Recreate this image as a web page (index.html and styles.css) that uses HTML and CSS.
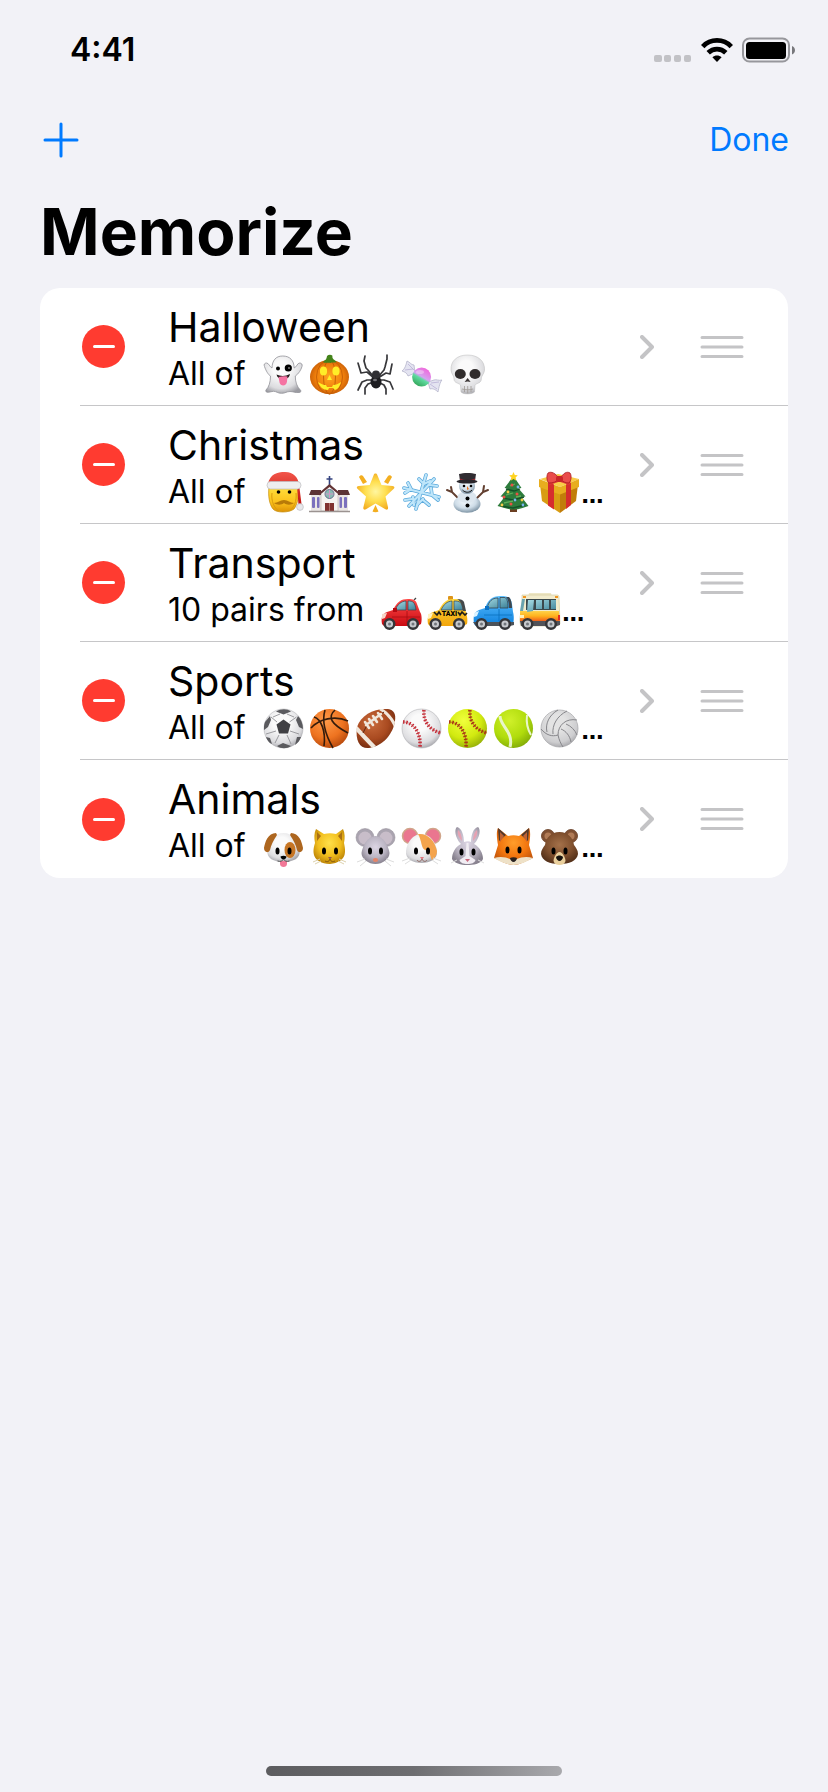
FILE: index.html
```html
<!DOCTYPE html>
<html lang="en">
<head>
<meta charset="utf-8">
<meta name="viewport" content="width=device-width, initial-scale=1">
<title>Memorize</title>
<link rel="stylesheet" href="styles.css">
</head>
<body>
<svg class="defs" width="0" height="0" aria-hidden="true">
  <defs>
    <radialGradient id="gWhite" cx=".45" cy=".35" r=".7"><stop offset=".3" stop-color="#fafafa"/><stop offset=".75" stop-color="#dcdcdf"/><stop offset="1" stop-color="#9b9ba1"/></radialGradient>
    <radialGradient id="gPumpkin" cx=".5" cy=".5" r=".6"><stop offset="0" stop-color="#ffa51f"/><stop offset=".6" stop-color="#f07f0c"/><stop offset="1" stop-color="#b65005"/></radialGradient>
    <linearGradient id="gCandy" x1=".2" y1="1" x2=".8" y2="0"><stop offset="0" stop-color="#2f9e50"/><stop offset=".42" stop-color="#5fdba0"/><stop offset=".52" stop-color="#d5a2f0"/><stop offset="1" stop-color="#f45fd8"/></linearGradient>
    <linearGradient id="gGold" x1="0" y1="0" x2="0" y2="1"><stop offset="0" stop-color="#ffdf3c"/><stop offset=".6" stop-color="#fcc21c"/><stop offset="1" stop-color="#dd9206"/></linearGradient>
    <radialGradient id="gStar" cx=".5" cy=".5" r=".55"><stop offset="0" stop-color="#fff6a0"/><stop offset=".5" stop-color="#ffdf50"/><stop offset="1" stop-color="#f2ab20"/></radialGradient>
    <linearGradient id="gRed" x1="0" y1="0" x2="0" y2="1"><stop offset="0" stop-color="#f2554a"/><stop offset="1" stop-color="#c11410"/></linearGradient>
    <radialGradient id="gSnow" cx=".45" cy=".35" r=".65"><stop offset="0" stop-color="#f8fcff"/><stop offset=".6" stop-color="#cfdde8"/><stop offset="1" stop-color="#7d93a4"/></radialGradient>
    <linearGradient id="gGlass" x1="0" y1="0" x2="1" y2="1"><stop offset="0" stop-color="#a6dbe4"/><stop offset="1" stop-color="#3b8197"/></linearGradient>
    <linearGradient id="gCarRed" x1="0" y1="0" x2="0" y2="1"><stop offset="0" stop-color="#ff4a48"/><stop offset="1" stop-color="#c90a12"/></linearGradient>
    <linearGradient id="gTaxi" x1="0" y1="0" x2="0" y2="1"><stop offset="0" stop-color="#ffd83c"/><stop offset="1" stop-color="#f2a50c"/></linearGradient>
    <linearGradient id="gCarBlue" x1="0" y1="0" x2="0" y2="1"><stop offset="0" stop-color="#5cc0ff"/><stop offset="1" stop-color="#0c7fdd"/></linearGradient>
    <linearGradient id="gBus" x1="0" y1="0" x2="0" y2="1"><stop offset="0" stop-color="#ffd24a"/><stop offset=".45" stop-color="#ffb31e"/><stop offset="1" stop-color="#f0501a"/></linearGradient>
    <radialGradient id="gOrangeBall" cx=".4" cy=".3" r=".75"><stop offset="0" stop-color="#ff9b4a"/><stop offset=".6" stop-color="#ee7320"/><stop offset="1" stop-color="#b4470c"/></radialGradient>
    <radialGradient id="gBrownBall" cx=".4" cy=".35" r=".7"><stop offset="0" stop-color="#c96b3c"/><stop offset=".6" stop-color="#a94a20"/><stop offset="1" stop-color="#712a0e"/></radialGradient>
    <radialGradient id="gLime" cx=".4" cy=".3" r=".75"><stop offset="0" stop-color="#f0ff3c"/><stop offset=".6" stop-color="#d2ea10"/><stop offset="1" stop-color="#92ac08"/></radialGradient>
    <radialGradient id="gTennis" cx=".4" cy=".3" r=".75"><stop offset="0" stop-color="#d0f02a"/><stop offset=".6" stop-color="#b0dc0c"/><stop offset="1" stop-color="#7fa808"/></radialGradient>
    <radialGradient id="gCat" cx=".5" cy=".4" r=".6"><stop offset="0" stop-color="#ffe04a"/><stop offset=".6" stop-color="#f2bf1e"/><stop offset="1" stop-color="#c08808"/></radialGradient>
    <radialGradient id="gMouse" cx=".5" cy=".4" r=".6"><stop offset="0" stop-color="#dcd5e4"/><stop offset=".6" stop-color="#bcb6c4"/><stop offset="1" stop-color="#88828f"/></radialGradient>
    <radialGradient id="gFox" cx=".5" cy=".4" r=".6"><stop offset="0" stop-color="#ff9d2a"/><stop offset=".6" stop-color="#f2760f"/><stop offset="1" stop-color="#c4560a"/></radialGradient>
    <radialGradient id="gBear" cx=".5" cy=".4" r=".6"><stop offset="0" stop-color="#a4714a"/><stop offset=".6" stop-color="#80502e"/><stop offset="1" stop-color="#56321a"/></radialGradient>
  </defs>
</svg>

<header class="status-bar">
  <time class="clock">4:41</time>
  <div class="indicators">
    <svg width="38" height="24" viewBox="0 0 38 24" aria-hidden="true"><g fill="#c2c2c6"><rect x="0" y="17" width="8" height="7" rx="2"/><rect x="10" y="17" width="7" height="7" rx="2"/><rect x="20" y="17" width="7" height="7" rx="2"/><rect x="30" y="17" width="7" height="7" rx="2"/></g></svg>
    <svg width="32" height="24" viewBox="0 0 32 24" aria-label="Wi-Fi"><g fill="none" stroke="#000" stroke-width="4.800"><path d="M1.700 8.600C9.500.4 22.500.4 30.300 8.600"/><path d="M7.200 14.800c5-4.900 12.600-4.900 17.600 0"/></g><path d="M16 24l-4.600-4.700c2.500-2.300 6.700-2.300 9.200 0z"/></svg>
    <svg width="54" height="26" viewBox="0 0 54 26" aria-label="Battery"><rect x="1" y="1.500" width="46" height="23" rx="6.500" fill="none" stroke="#97979c" stroke-width="2"/><rect x="4" y="5" width="40" height="17" rx="3.500"/><path d="M50 9c4 1.500 4 7 0 8.500z" fill="#77777b"/></svg>
  </div>
</header>

<nav class="toolbar">
  <button class="tool" type="button" aria-label="Add theme"><svg width="36" height="36" viewBox="0 0 36 36"><path d="M18 2v32M2 18h32" stroke="#007aff" stroke-width="3" stroke-linecap="round"/></svg></button>
  <button class="tool" type="button">Done</button>
</nav>

<main class="content">
<h1 class="title">Memorize</h1>
<ul class="themes">
  <li class="theme">
    <button class="delete" type="button" aria-label="Delete Halloween"></button>
    <div class="info">
      <h2 class="name">Halloween</h2>
      <p class="detail"><span class="pairs">All of</span>
        <span class="emojis">
          <svg class="emoji" viewBox="0 0 46 46"><path d="M22.700 5c-7 0-10.500 4.500-10.700 12-2.500-1-3-5-5.500-5-2 0-3 1.500-2 3.500C6 20 8.500 24 10.500 25c0 6-1.500 11-4.500 14-.8 1.500.5 2.500 2.500 2.300 2-.2 3-1 5-1 3 0 4 2 8 2s5-1.800 8.500-1.800c3 0 5 1.400 9 1 2-.2 2.500-1.500 1.300-2.500-3.500-3.500-5-8-5-14C38.500 23 41 19 42 15.500c.7-2-.5-3.500-2.200-3.500-2.700 0-2.900 4-5.600 5C34 9.500 30 5 22.700 5z" fill="url(#gWhite)" stroke="#929298" stroke-width=".8"/><circle cx="18" cy="17.500" r="2"/><circle cx="28.300" cy="17" r="3.600"/><circle cx="29" cy="17" r="1" fill="#777"/><path d="M16.500 23.500c4 2 9 2 13.500-.5-.5 3-2.500 5-6.500 5s-6.500-1.500-7-4.500z" fill="#24191b"/><path d="M18.500 26c3-1 6-1 9-.5l-.5 5c-.5 5-6.500 5-7.500 1z" fill="#f573a2"/></svg>
          <svg class="emoji" viewBox="0 0 46 46"><ellipse cx="23.500" cy="26" rx="19.500" ry="17" fill="url(#gPumpkin)"/><g fill="none" stroke="#c25c06" stroke-width=".9"><ellipse cx="23.500" cy="26" rx="13" ry="17"/><ellipse cx="23.500" cy="26" rx="6" ry="17"/></g><path d="M17 11c2-2 3.500-2 4-6 1.500-1.500 4-1.500 5.500-.3-.8 3 2 4 4 6-2.500 1.500-4 0-6 1.300-2-1-5 .7-7.500-1z" fill="#43831a"/><g fill="#ffee28"><ellipse cx="17.500" cy="20" rx="3.600" ry="4.500"/><ellipse cx="30" cy="20" rx="3.600" ry="4.500"/><path d="M23.500 24l2.500 5h-5zM12 31c4 2.500 6 3 8 3l1 2h5l1-2c3 0 5-1 8-3-1 4-3 7-6 8l-2-2h-4l-1 2c-5 0-8-3-10-8z"/></g></svg>
          <svg class="emoji" viewBox="0 0 46 46"><g fill="none" stroke="#38383b" stroke-width="1.700" stroke-linecap="round" stroke-linejoin="round"><path d="M22 26l-6-7-2-2-2-7 1-5M22 27l-7-6-6 1-3-10M22 29h-7l-5 2-4 8M22 31l-6 2-3 4v6M26 26l6-7 1-3 2-8V4M26 27l8-5 4 1 2-10M26 29h6l6 2 3 7M26 31l6 3 2 4v5"/></g><ellipse cx="24" cy="31" rx="5.500" ry="6.500" fill="#1e1e21"/><circle cx="24" cy="23.500" r="4" fill="#303034"/><ellipse cx="23" cy="29" rx="2" ry="1.200" fill="#747478"/></svg>
          <svg class="emoji" viewBox="0 0 46 46"><g fill="#e4e4f1" stroke="#adadc6" stroke-width=".7"><path d="M17 22l-7 3c-1-3-3-4-6-5 3-2 4-6 5-10 3 1 4 4 7 4z"/><path d="M30 31l6-2c2-1 5 1 8 0-2 2-3 7-4 12-2-2-5-4-8-3z"/></g><path d="M7 19l8-1M10 13l6 6M32 33l7 5M33 32l8-1" stroke="#b9b0d5" stroke-width=".8"/><circle cx="23.600" cy="26" r="9.500" fill="url(#gCandy)"/><ellipse cx="22" cy="21" rx="4" ry="2" fill="#fff" opacity=".35"/></svg>
          <svg class="emoji" viewBox="0 0 46 46"><path d="M23.500 4C13 4 6.500 10 7 19c.2 4 3.500 6 3 9-.2 4 5 4 6.500 6l.5 7c2 2.500 11 2.500 13.500 0l.5-7c2-2 6.500-2 6.300-6-.3-3 3-5 3.200-9C41 10 34 4 23.500 4z" fill="url(#gWhite)" stroke="#bbb" stroke-width=".5"/><ellipse cx="16.300" cy="23" rx="5.500" ry="5" fill="#302c2c"/><ellipse cx="31" cy="23" rx="5.500" ry="5" fill="#302c2c"/><path d="M23.600 27l3 4-3-.5-3 .5z" fill="#3c3636"/><path d="M18 38c4 1 8 1 11 0M20.500 35v6M23.700 35v7M27 35v6" fill="none" stroke="#a09b96" stroke-width=".8"/></svg>
        </span>
      </p>
    </div>
    <svg class="chevron" viewBox="0 0 14 24" aria-hidden="true"><path d="M2 2l10 10L2 22"/></svg>
    <svg class="handle" viewBox="0 0 44 24" aria-label="Reorder"><path d="M2 2.500h40M2 12h40M2 21.500h40"/></svg>
  </li>
  <li class="theme">
    <button class="delete" type="button" aria-label="Delete Christmas"></button>
    <div class="info">
      <h2 class="name">Christmas</h2>
      <p class="detail"><span class="pairs">All of</span>
        <span class="emojis">
          <svg class="emoji" viewBox="0 0 46 46"><path d="M9 18c-1 8 0 17 4 22 3 4 16 4 21 0 4-5 5-14 4-22z" fill="url(#gGold)" stroke="#c58c0a" stroke-width=".7"/><path d="M8 15C10 5 17 3 25 3c9 0 13 6 14 12l2.500 20-3 1L37 17z" fill="url(#gRed)"/><rect x="7" y="12.500" width="34" height="7.500" rx="3.700" fill="#eeeeef" stroke="#bdbdc1" stroke-width=".7"/><circle cx="40" cy="38" r="3.400" fill="#e7e7ea" stroke="#b4b4b8" stroke-width=".6"/><circle cx="18.500" cy="23" r="1.800"/><circle cx="29.500" cy="23" r="1.800"/><path d="M12 24c-1 8 2 15 7 18M36 24c1 8-2 15-7 18" fill="none" stroke="#d99c0d"/><path d="M14 34c4 0 6-3 10-3s6 3 10 3c-3 2.500-8 2-10 0-2 2-7 2.500-10 0z" fill="#b87a08"/></svg>
          <svg class="emoji" viewBox="0 0 46 46"><path d="M23.500 7v11M20.500 10h6" stroke="#34437f" stroke-width="1.600"/><path d="M5 26h37v16H5z" fill="#eae6e4"/><path d="M15 24l8.500-8 8.500 8v18H15z" fill="#f6f3f0" stroke="#b9b0ab" stroke-width=".6"/><path d="M3 26l2-5h10v5zM44 26l-2-5H32v5z" fill="#5c3335"/><path d="M13 24l10.500-9L34 24v2.500L23.500 18 13 26.500z" fill="#623335"/><circle cx="23.500" cy="25" r="4.500" fill="#89bcb3" stroke="#67708f"/><path d="M23.500 21v8M19.500 25h8" stroke="#d495c3"/><g fill="#7b70bd"><rect x="6" y="28" width="3" height="11" rx="1"/><rect x="11" y="28" width="2.500" height="11" rx="1"/><rect x="33.500" y="28" width="2.500" height="11" rx="1"/><rect x="38" y="28" width="3" height="11" rx="1"/></g><path d="M19 34h9v9h-9z" fill="#80322f"/><path d="M23.500 34v9" stroke="#cf9b92" stroke-width=".6"/><path d="M3 42.500h41" stroke="#9b9391" stroke-width="1.500"/></svg>
          <svg class="emoji" viewBox="0 0 46 46"><path d="M23.500 4.500c.8 0 1.400.5 1.800 1.400l4.200 10 11 1c2 .2 2.600 1.800 1 3.200l-8 7.500 2.500 10.700c.5 2-1 3-2.600 2L23.500 34.500 14 40.300c-1.600 1-3.200 0-2.600-2l2.600-10.700-8.300-7.500c-1.500-1.400-1-3 1-3.200l11-1 4-10c.4-.9 1-1.400 1.800-1.400z" fill="url(#gStar)"/><path d="M7 8c1-2 3-2.500 4-1l4 6-4 2zM40 8c-1-2-3-2.500-4-1l-4 6 4 2zM23.500 36l3 6.500c-1.500 1-4.500 1-6 0z" fill="#f3ae20"/></svg>
          <svg class="emoji" viewBox="0 0 46 46"><g stroke="#5aa9dc" stroke-width="3.600" stroke-linecap="round" fill="none"><path d="M28 6L18 40M6 19l35 9M11 37l25-27M21 10l5 5 6-3M33 19l1 7 6 5M10 14l3 6-6 4M15 28l1 8M25 30l-6 6M25 31l6 5M14 30l-7 1M32 16l7 1"/></g><g stroke="#bfe6fa" stroke-width="2.200" stroke-linecap="round" fill="none"><path d="M28 6L18 40M6 19l35 9M11 37l25-27M21 10l5 5 6-3M33 19l1 7 6 5M10 14l3 6-6 4M15 28l1 8M25 30l-6 6M25 31l6 5M14 30l-7 1M32 16l7 1"/></g></svg>
          <svg class="emoji" viewBox="0 0 46 46"><path d="M14 29l-6-6-5-2M8 23l-1-5M33 29l6-6 5-2M39 23l1-6" fill="none" stroke="#634031" stroke-width="2" stroke-linecap="round"/><ellipse cx="23" cy="35" rx="13.500" ry="8.800" fill="url(#gSnow)"/><ellipse cx="23" cy="28" rx="9.500" ry="6" fill="#dce6ee"/><circle cx="23" cy="17" r="8" fill="url(#gSnow)"/><path d="M15 5c4-1.500 13-1.500 17 0l-1 7H16z" fill="#302c31"/><path d="M16 9.500c5 2 10 2 15 0v2.500c-5 1.500-10 1.500-15 0z" fill="#9d2831"/><ellipse cx="23" cy="12.500" rx="10.500" ry="2" fill="#29262b"/><circle cx="20" cy="17" r="1.300"/><circle cx="27" cy="17" r="1.300"/><path d="M23 17l2 3-2 1z" fill="#ef7620"/><path d="M18.500 21c3 3 7 3 9.500 0" fill="none" stroke="#1a1a1a"/><circle cx="23.500" cy="29.500" r="2"/><circle cx="23.500" cy="36.500" r="2"/></svg>
          <svg class="emoji" viewBox="0 0 46 46"><path d="M20 38h7v5h-7z" fill="#6b3f22"/><path d="M23.500 7L14.500 19l3 .5-7 8 4 .5-7 9 7 2c6 2 12 2 18 0l6-2-7-9 4-.5-7-8 3-.5z" fill="#2d7c3c"/><path d="M16 20l8 2 6-2M13 29l10 2 11-3M11 37l12 2 12-3" fill="none" stroke="#145128" stroke-width="1.300"/><path d="M20 17l5-2M16 26l7-2M14 34l9-2M26 28l5-1" stroke="#61ae5a" stroke-width="1.300"/><path d="M23.500 3l1.300 3 3 .3-2.200 2.200.6 3.200-2.700-1.700-2.700 1.700.6-3.200-2.200-2.200 3-.3z" fill="#ffd321"/><g fill="#e84f43"><circle cx="22" cy="16" r="1.500"/><circle cx="27" cy="25" r="1.500"/><circle cx="14" cy="28" r="1.500"/><circle cx="21" cy="35" r="1.500"/></g><g fill="#f5cd4b"><circle cx="18" cy="23" r="1.400"/><circle cx="32" cy="31" r="1.400"/><circle cx="12" cy="36" r="1.400"/></g><g fill="#79b6ef"><circle cx="28" cy="18" r="1.400"/><circle cx="25" cy="31" r="1.400"/><circle cx="33" cy="36" r="1.400"/></g></svg>
          <svg class="emoji" viewBox="0 0 46 46"><path d="M4 15l20 7v22L6 32z" fill="#d89c12"/><path d="M42 15l-18 7v22l16-12z" fill="#c17d0a"/><path d="M4 10l18-5 21 5-19 8z" fill="#f9cc47"/><path d="M3 10l21 8 19-8v8l-19 7.500L3 18z" fill="#e8ad1e"/><path d="M12 13l6 2.500v25l-6-4zM30 15.500l5-2V36l-5 4z" fill="#d62d2d"/><path d="M13 7l21 7M33 7l-20 7" stroke="#df3837" stroke-width="4"/><path d="M23 10c-3-6-8-8-11-6-2 3-1 9 1 10 4 0 7-1 10-4zM24 10c3-6 7-8 10-6 2 3 1 8-1 10-3 0-6-1-9-4z" fill="#ea4c4a" stroke="#a91a1e" stroke-width=".8"/><rect x="20" y="7" width="7" height="6" rx="2" fill="#c82528"/></svg>
          <span class="more">…</span>
        </span>
      </p>
    </div>
    <svg class="chevron" viewBox="0 0 14 24" aria-hidden="true"><path d="M2 2l10 10L2 22"/></svg>
    <svg class="handle" viewBox="0 0 44 24" aria-label="Reorder"><path d="M2 2.500h40M2 12h40M2 21.500h40"/></svg>
  </li>
  <li class="theme">
    <button class="delete" type="button" aria-label="Delete Transport"></button>
    <div class="info">
      <h2 class="name">Transport</h2>
      <p class="detail"><span class="pairs">10 pairs from</span>
        <span class="emojis">
          <svg class="emoji" viewBox="0 0 46 46"><path d="M36 13l2-2" stroke="#444" stroke-width="1.300"/><path d="M4 37c-1-6 0-10 5-12l6-2c4-8 8-11 15-11 5 0 8 1 9 5l3 8c2 2 2 9 1 12l-4 2H6z" fill="url(#gCarRed)"/><path d="M17 23c3-6 6-8.500 11-9v9zM30 14c5 0 7 1 8 9h-8z" fill="url(#gGlass)" stroke="#36444e" stroke-width=".7"/><path d="M4 27l5-1-2 5-3 1z" fill="#f6d5c8"/><path d="M14 30h28M29 24v14" stroke="#a80c12" stroke-width=".8"/><path d="M15 21h4v4h-4z" fill="#b70911"/><g stroke="#353639" stroke-width="2.500" fill="#c6c9cd"><circle cx="11.500" cy="37" r="4.800"/><circle cx="35" cy="37" r="4.800"/></g><circle cx="11.500" cy="37" r="1.500" fill="#71767c"/><circle cx="35" cy="37" r="1.500" fill="#71767c"/></svg>
          <svg class="emoji" viewBox="0 0 46 46"><rect x="24" y="9" width="5" height="4" rx="1" fill="#dd9419"/><path d="M4 37c-1-6 0-10 5-12l6-2c4-8 8-11 15-11 7 0 9 1 11 11 2 3 3 11 2 14l-4 2H6z" fill="url(#gTaxi)"/><path d="M17 23c3-6 6-8.500 11-9v9zM30 14c6 0 8 1 9 9h-9z" fill="url(#gGlass)" stroke="#36444e" stroke-width=".7"/><path d="M33 12c4 0 6 1 7 3l2 9h-3c-1-6-2-10-6-12z" fill="#44494b"/><path d="M4 27l5-1-2 5-3 1z" fill="#fff1c1"/><path d="M10 25l3 3 2-3 2 3M34 25l2 3 2-3 3 3 2-2" fill="none" stroke="#1c1c1a" stroke-width="1.600"/><text class="taxi-sign" x="25.500" y="29" text-anchor="middle">TAXI</text><g stroke="#353639" stroke-width="2.500" fill="#c6c9cd"><circle cx="11.500" cy="37" r="4.800"/><circle cx="35" cy="37" r="4.800"/></g><circle cx="11.500" cy="37" r="1.500" fill="#71767c"/><circle cx="35" cy="37" r="1.500" fill="#71767c"/></svg>
          <svg class="emoji" viewBox="0 0 46 46"><path d="M4 37c-1-7 0-12 5-14l6-2c3-8 7-12 15-12 8 0 11 1 12 8l1 8c1 3 1 9 0 12l-4 2H6z" fill="url(#gCarBlue)"/><path d="M17 21c2-7 5-10 11-10v10zM30 10.500h5c2 1 3 4 3 10.500h-8z" fill="url(#gGlass)" stroke="#36444e" stroke-width=".8"/><path d="M36 10h3c2 2 3 6 3 11h-3c0-5-1-9-3-11z" fill="#3d474f"/><path d="M3 35h41v3l-4 1H6z" fill="#4c535a"/><path d="M4 26l5-2-2 5-3 1z" fill="#dcf3ff"/><path d="M14 28h28M29 22v12" stroke="#0870bc" stroke-width=".8"/><path d="M15 19h4v4h-4z" fill="#0b72c5"/><g stroke="#353639" stroke-width="2.500" fill="#c6c9cd"><circle cx="11.500" cy="37" r="4.800"/><circle cx="35" cy="37" r="4.800"/></g><circle cx="11.500" cy="37" r="1.500" fill="#71767c"/><circle cx="35" cy="37" r="1.500" fill="#71767c"/></svg>
          <svg class="emoji" viewBox="0 0 46 46"><path d="M13 6h22l1 4H12z" fill="#eee7c6"/><path d="M6 8h35c1.500 0 2 1 2 2l1 27-4 2H5c-2-5-1-11 1-16z" fill="#f2eccd" stroke="#d1c793" stroke-width=".6"/><path d="M4 24h39l1 11H4z" fill="url(#gBus)"/><path d="M10 12h30v11H10z" fill="#3b484c"/><path d="M6 12l3 0-2 12H4z" fill="#6aa4af"/><path d="M12 13h6l-1 11-6 1zM20 13h6v9h-6zM28 13h5v9h-5zM35 13h5v9h-5z" fill="url(#gGlass)"/><path d="M4 34h40v4l-3 1H5z" fill="#525359"/><path d="M4 28h4v3H4z" fill="#fff2bb"/><path d="M42 28h2v5h-2z" fill="#e22b24"/><path d="M7 9h3v2H7zM39 9h3v2h-3z" fill="#f09624"/><g stroke="#353639" stroke-width="2.500" fill="#c6c9cd"><circle cx="11.500" cy="37" r="4.800"/><circle cx="35" cy="37" r="4.800"/></g><circle cx="11.500" cy="37" r="1.500" fill="#71767c"/><circle cx="35" cy="37" r="1.500" fill="#71767c"/></svg>
          <span class="more">…</span>
        </span>
      </p>
    </div>
    <svg class="chevron" viewBox="0 0 14 24" aria-hidden="true"><path d="M2 2l10 10L2 22"/></svg>
    <svg class="handle" viewBox="0 0 44 24" aria-label="Reorder"><path d="M2 2.500h40M2 12h40M2 21.500h40"/></svg>
  </li>
  <li class="theme">
    <button class="delete" type="button" aria-label="Delete Sports"></button>
    <div class="info">
      <h2 class="name">Sports</h2>
      <p class="detail"><span class="pairs">All of</span>
        <span class="emojis">
          <svg class="emoji" viewBox="0 0 46 46"><circle cx="23.500" cy="23.500" r="19.500" fill="url(#gWhite)" stroke="#a6a6aa" stroke-width=".5"/><path d="M20 9L13 12M27 9l7 3M17 17l-6-5M29.500 17l7-5M30 26l9 3M27 30l4 9M19 30l-4 8M16 26l-10 3" fill="none" stroke="#929296" stroke-width=".9"/><path d="M23.500 14.500l7 5-2.500 9h-9l-2.500-9z" fill="#404044"/><path d="M16 6.500c5-3 11-3 15 0l-7.500 3zM38 11c3 3 5 8 5 13l-4-2-3-7zM5 17l5-6 1 4-3 7-4 3c0-4 0-5 1-8zM17 41l6-3 8 3c-4 3-10 3-14 0zM37 32l4 0c-1 3-3 6-6 8zM6 32l4 1 2 6c-3-1-5-4-6-7z" fill="#5a5a5e"/></svg>
          <svg class="emoji" viewBox="0 0 46 46"><circle cx="23.500" cy="23.500" r="19.500" fill="url(#gOrangeBall)"/><g fill="none" stroke="#351c0c" stroke-width="1.600"><path d="M5 23c8-9 24-13 37-7M19 5c-3 10 0 24 8 38M8 12c7 2 12 14 10 29M29 5c-8 7-4 14 13 23"/></g></svg>
          <svg class="emoji" viewBox="0 0 46 46"><path d="M5 22C9 10 22 3 36 4c6 1 8 5 7 12-2 13-12 25-26 27-9 1-14-7-12-21z" fill="url(#gBrownBall)"/><path d="M28 4l3 0c5 3 9 8 12 13l-1 5C39 15 34 9 27 5zM5 21c5 5 13 14 19 20l-4 2C14 37 9 31 4 26z" fill="#f0e7dc"/><path d="M11 28l4-8 17-13" fill="none" stroke="#5e2610"/><path d="M14 20l15-11M13 17l4 6M17 14l4 6M21 11l4 6M26 8l4 6" fill="none" stroke="#f1e6da" stroke-width="2.600" stroke-linecap="round"/></svg>
          <svg class="emoji" viewBox="0 0 46 46"><circle cx="23.500" cy="23.500" r="19.500" fill="url(#gWhite)" stroke="#a6a6aa" stroke-width=".5"/><g fill="none" stroke="#c82b38" stroke-width="3.600" stroke-dasharray="1.500 1.700"><path d="M5 17c11 0 18 11 17 25M26 5c-1 11 5 20 17 23"/></g><g fill="none" stroke="#b44" stroke-width=".6"><path d="M5 17c11 0 18 11 17 25M26 5c-1 11 5 20 17 23"/></g></svg>
          <svg class="emoji" viewBox="0 0 46 46"><circle cx="23.500" cy="23.500" r="19.500" fill="url(#gLime)"/><g fill="none" stroke="#ad3519" stroke-width="3.600" stroke-dasharray="1.500 1.700"><path d="M5 17c11 0 18 11 17 25M26 5c-1 11 5 20 17 23"/></g><g fill="none" stroke="#a33c12" stroke-width=".7"><path d="M5 17c11 0 18 11 17 25M26 5c-1 11 5 20 17 23"/></g></svg>
          <svg class="emoji" viewBox="0 0 46 46"><circle cx="23.500" cy="23.500" r="19.500" fill="url(#gTennis)"/><g fill="none" stroke="#e9f5ca" stroke-width="3"><path d="M10 11c0 10 14 16 10 31"/><path d="M37 10c-1 8 1 15 4 20" stroke-width="2"/></g></svg>
          <svg class="emoji" viewBox="0 0 46 46"><circle cx="23.500" cy="23.500" r="18.500" fill="url(#gWhite)" stroke="#a1a1a4" stroke-width=".7"/><circle cx="23.500" cy="23.500" r="18" fill="#aaa" opacity=".28"/><g fill="none" stroke="#86868a" stroke-width="1"><path d="M22 30c-6 2-12 0-17-6M22 30c0-10 8-17 19-15M22 30c1 5 3 9 5 12M17 29c-1-9 4-18 14-23M11 27C9 19 13 10 22 5M25 24c5 2 9 7 10 13M30 19c5 2 9 6 11 11"/></g></svg>
          <span class="more">…</span>
        </span>
      </p>
    </div>
    <svg class="chevron" viewBox="0 0 14 24" aria-hidden="true"><path d="M2 2l10 10L2 22"/></svg>
    <svg class="handle" viewBox="0 0 44 24" aria-label="Reorder"><path d="M2 2.500h40M2 12h40M2 21.500h40"/></svg>
  </li>
  <li class="theme">
    <button class="delete" type="button" aria-label="Delete Animals"></button>
    <div class="info">
      <h2 class="name">Animals</h2>
      <p class="detail"><span class="pairs">All of</span>
        <span class="emojis">
          <svg class="emoji" viewBox="0 0 46 46"><path d="M23.500 10C14 10 9 18 7.500 28c-1 7 6 11 16 11s17-4 16-11C38 18 33 10 23.500 10z" fill="url(#gWhite)"/><path d="M16 10C8 10 5 19 4 25c0 4 4 6 6 2 1-5 3-9 7-15zM31 10c8 0 11 9 12 15 0 4-4 6-6 2-1-5-3-9-7-15z" fill="#ad661f"/><ellipse cx="30" cy="27" rx="5.500" ry="8" fill="#c67524"/><path d="M20 38h7v3c0 4-7 4-7 0z" fill="#f17897"/><ellipse cx="17.500" cy="28" rx="2" ry="3.500"/><ellipse cx="29.500" cy="28" rx="2" ry="3.500"/><path d="M20.500 33.500c2-1 4-1 6 0 0 2-2 3-3 3s-3-1-3-3z"/><path d="M23.500 36c-1 2-3 3-6 2M23.500 36c1 2 3 3 6 2" fill="none" stroke="#555"/></svg>
          <svg class="emoji" viewBox="0 0 46 46"><path d="M10 6l8 5c4-1 8-1 12 0l7-5c2 4 2 9 1 14 2 9 3 19-14 21C6 40 6 29 9 20c-1-5-1-10 1-14z" fill="url(#gCat)"/><path d="M11 9l4 4-4 5zM36 9l-4 4 4 5z" fill="#a96f13"/><path d="M14 36l-7 3M15 38l-6 3M33 36l7 3M32 38l6 3" stroke="#ddd2ae"/><ellipse cx="18" cy="28" rx="2" ry="3.500"/><ellipse cx="30" cy="28" rx="2" ry="3.500"/><path d="M22 34h4l-2 2.500z" fill="#93584f"/><path d="M24 36c-1 3-3 3-5 2M24 36c1 3 3 3 5 2" fill="none" stroke="#85570e"/></svg>
          <svg class="emoji" viewBox="0 0 46 46"><g fill="#aaa4b0" stroke="#8c8691" stroke-width=".5"><circle cx="13" cy="14.500" r="9"/><circle cx="34" cy="14.500" r="9"/></g><circle cx="13" cy="15" r="6.500" fill="#c8bdc9"/><circle cx="34" cy="15" r="6.500" fill="#c8bdc9"/><path d="M23.500 13c-7 0-13 9-14 17 0 6 7 11 14 11s14-5 14-11c-1-8-7-17-14-17z" fill="url(#gMouse)"/><path d="M13 36l-8 3M14 38l-6 5M34 36l8 3M33 38l6 5" stroke="#ddd"/><ellipse cx="18" cy="28" rx="2" ry="3.500"/><ellipse cx="29" cy="28" rx="2" ry="3.500"/><ellipse cx="23.500" cy="37" rx="2.600" ry="2" fill="#e48468"/></svg>
          <svg class="emoji" viewBox="0 0 46 46"><g fill="#ea768f" stroke="#d0a58a" stroke-width="1.500"><circle cx="12" cy="13" r="7.500"/><circle cx="35" cy="13" r="7.500"/></g><path d="M23.500 11C15 11 9 19 8 28c-1 8 7 12 15.500 12S40 36 39 28c-1-9-7-17-15.500-17z" fill="url(#gWhite)"/><path d="M20 11c10-1 17 7 19 17 0 4-2 7-5 9-2-4-2-9-7-10-4-2-3-9-7-16z" fill="#f4a44c"/><path d="M12 35l-8 3M13 37l-6 4M35 35l8 3M34 37l6 4" stroke="#ddd"/><ellipse cx="18" cy="28" rx="2" ry="3.500"/><ellipse cx="30" cy="28" rx="2" ry="3.500"/><path d="M22 34h4l-2 3z" fill="#db7880"/><path d="M24 36c-1 3-4 3-5 1M24 36c1 3 4 3 5 1" fill="none" stroke="#8e6763"/></svg>
          <svg class="emoji" viewBox="0 0 46 46"><path d="M17 21C11 15 10 6 13 4c5 1 7 9 7 15 3-1 5-1 7 0 0-6 2-14 7-15 3 2 2 11-4 17 6 3 9 10 9 15-2 5-10 6-16 6S10 40 8 36c0-6 3-12 9-15z" fill="url(#gMouse)"/><path d="M14 7c3 2 4 8 4 11-3-3-5-7-4-11zM33 7c-3 2-4 8-4 11 3-3 5-7 4-11z" fill="#e7a2b2"/><path d="M22.500 20h2l1 13 6 4c-1 3-4 4-8 4s-7-1-8-4l6-4z" fill="#f1edf3"/><path d="M13 37l-6 3M34 37l6 3" stroke="#ddd"/><ellipse cx="17.500" cy="29" rx="2" ry="3.500"/><ellipse cx="29.500" cy="29" rx="2" ry="3.500"/><path d="M21 36h5l-2.500 3z" fill="#c9677d"/></svg>
          <svg class="emoji" viewBox="0 0 46 46"><path d="M8 5l10 8c4-1 7-1 11 0l10-8c2 4 1 11 0 17l4 13c-5 2-13 7-19.500 7S9 37 4 35l4-13C7 16 6 9 8 5z" fill="url(#gFox)"/><path d="M8 5l8 7-7 6zM39 5l-8 7 7 6z" fill="#53392c"/><path d="M10 9l4 4-4 6zM37 9l-4 4 4 6z" fill="#be6234"/><path d="M4 35c6-2 12-1 16 1h7c4-2 10-3 16-1-5 3-13 7-19.500 7S9 38 4 35z" fill="#eee1c7"/><ellipse cx="17.500" cy="27" rx="2" ry="3.500"/><ellipse cx="29.500" cy="27" rx="2" ry="3.500"/><path d="M20 35c2-1 5-1 7 0 0 2-2 4-3.500 4S20 37 20 35z" fill="#292220"/></svg>
          <svg class="emoji" viewBox="0 0 46 46"><g fill="#805032" stroke="#63391f" stroke-width=".8"><circle cx="12" cy="13" r="6.500"/><circle cx="35" cy="13" r="6.500"/></g><circle cx="12" cy="13" r="3.500" fill="#b17b56"/><circle cx="35" cy="13" r="3.500" fill="#b17b56"/><path d="M23.500 9C15 9 10 15 9 22c-2 3-4 5-4 9 1 7 9 10 18.500 10S41 38 42 31c0-4-2-6-4-9C37 15 32 9 23.500 9z" fill="url(#gBear)"/><path d="M23.500 29c-3 0-6 6-6 9 1 3 3 4 6 4s5-1 6-4c0-3-3-9-6-9z" fill="#ead09d"/><ellipse cx="17.500" cy="28" rx="2" ry="3.500"/><ellipse cx="29.500" cy="28" rx="2" ry="3.500"/><path d="M20 34c2-2 5-2 7 0 0 2-2 4-3.500 4S20 36 20 34z" fill="#17120f"/></svg>
          <span class="more">…</span>
        </span>
      </p>
    </div>
    <svg class="chevron" viewBox="0 0 14 24" aria-hidden="true"><path d="M2 2l10 10L2 22"/></svg>
    <svg class="handle" viewBox="0 0 44 24" aria-label="Reorder"><path d="M2 2.500h40M2 12h40M2 21.500h40"/></svg>
  </li>
</ul>
</main>
<footer class="home"><div class="home-indicator"></div></footer>
</body>
</html>
```
FILE: styles.css
```css
* {
  box-sizing: border-box;
}

body {
  margin: 0;
  min-height: 100vh;
  display: flex;
  flex-direction: column;
  background: #f2f2f7;
  color: #000;
  font-family: Inter, "Liberation Sans", sans-serif;
}

button {
  padding: 0;
  border: 0;
  background: none;
  font: inherit;
}

svg {
  display: block;
  flex: none;
}

.defs {
  position: absolute;
}

.status-bar {
  display: flex;
  justify-content: space-between;
  align-items: center;
  height: 100px;
  padding: 0 32px 0 70px;
}

.clock {
  font-size: 32px;
  font-weight: 600;
  line-height: 40px;
}

.indicators {
  display: flex;
  align-items: center;
  gap: 9px;
}

.toolbar {
  display: flex;
  justify-content: space-between;
  align-items: center;
  height: 80px;
  padding: 0 39px 0 43px;
}

.tool {
  color: #007aff;
  font-size: 32px;
  line-height: 40px;
}

.content {
  flex: 1;
  padding: 0 40px;
}

.title {
  margin: 0;
  padding: 12px 0 16px;
  font-size: 64px;
  font-weight: 700;
  line-height: 80px;
}

.themes {
  margin: 0;
  padding: 0 0 0 40px;
  border-radius: 20px;
  background: #fff;
  list-style: none;
}

.theme {
  display: flex;
  align-items: center;
  height: 118px;
  padding: 0 44px 0 2px;
  border-bottom: 1px solid #c6c6c8;
}

.theme:last-child {
  border-bottom: 0;
}

.delete {
  flex: none;
  display: grid;
  place-items: center;
  width: 43px;
  height: 43px;
  border-radius: 50%;
  background: #ff3b30;
}

.delete::before {
  content: "";
  width: 22px;
  height: 3px;
  border-radius: 2px;
  background: #fff;
}

.info {
  flex: 1;
  min-width: 0;
  margin-left: 43px;
  padding-top: 6px;
  white-space: nowrap;
}

.name {
  margin: 0;
  font-size: 41px;
  font-weight: 400;
  line-height: 48px;
}

.detail {
  display: flex;
  align-items: center;
  gap: 14px;
  margin: 0;
  font-size: 32px;
  line-height: 46px;
}

.emojis {
  display: flex;
}

.emoji {
  width: 46px;
  height: 46px;
}

.taxi-sign {
  font-family: Roboto, sans-serif;
  font-size: 7px;
  font-weight: 900;
}

.more {
  height: 46px;
  font-family: "DejaVu Sans", sans-serif;
  font-size: 22px;
  font-weight: 700;
  line-height: 54px;
}

.chevron {
  width: 14px;
  height: 24px;
  margin: 0 46px;
  fill: none;
  stroke: #c4c4c6;
  stroke-width: 4;
  stroke-linecap: round;
  stroke-linejoin: round;
}

.handle {
  width: 44px;
  height: 24px;
  fill: none;
  stroke: #c4c4c6;
  stroke-width: 3;
  stroke-linecap: round;
}

.home {
  display: flex;
  justify-content: center;
  padding-bottom: 16px;
}

.home-indicator {
  width: 296px;
  height: 10px;
  border-radius: 5px;
  background: linear-gradient(100deg, #5c5c5f, #6e6e71 50%, #a9a9ad);
}
```
